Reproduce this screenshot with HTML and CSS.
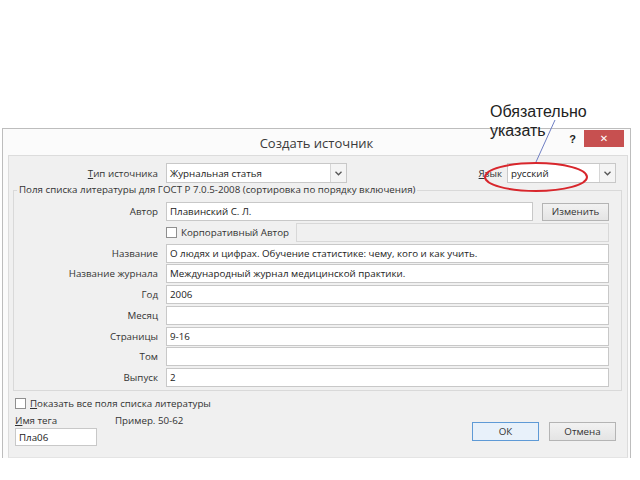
FILE: index.html
```html
<!DOCTYPE html>
<html lang="ru">
<head>
<meta charset="utf-8">
<title>Создать источник</title>
<link rel="stylesheet" href="styles.css">
</head>
<body>
<div class="page">
  <div class="window">
    <div class="titlebar">
      <span></span>
      <span class="title">Создать источник</span>
      <span class="controls"><span class="help">?</span><span class="close">✕</span></span>
    </div>
    <div class="client">
      <div class="toprow">
        <span class="lbl typelbl"><u>Т</u>ип источника</span>
        <div class="combo typecombo"><span class="val">Журнальная статья</span><span class="arrow"><svg width="7" height="5" viewBox="0 0 7 5"><polyline points="0.5,0.8 3.5,3.8 6.5,0.8" fill="none" stroke="#555" stroke-width="1.3"/></svg></span></div>
        <span class="lbl langlbl"><u>Я</u>зык</span>
        <div class="combo langcombo"><span class="val">русский</span><span class="arrow"><svg width="7" height="5" viewBox="0 0 7 5"><polyline points="0.5,0.8 3.5,3.8 6.5,0.8" fill="none" stroke="#555" stroke-width="1.3"/></svg></span></div>
      </div>
      <fieldset class="group">
        <legend>Поля списка литературы для ГОСТ Р 7.0.5-2008 (сортировка по порядку включения)</legend>
        <div class="fields">
          <span class="lbl">Автор</span>
          <div class="authorrow"><div class="input grow">Плавинский С. Л.</div><button class="btn edit">Изменить</button></div>
          <span></span>
          <div class="corprow"><span class="check"></span><span class="corplbl">Корпоративный Автор</span><div class="input disabled grow"></div></div>
          <span class="lbl">Название</span>
          <div class="input">О людях и цифрах. Обучение статистике: чему, кого и как учить.</div>
          <span class="lbl">Название журнала</span>
          <div class="input">Международный журнал медицинской практики.</div>
          <span class="lbl">Год</span>
          <div class="input">2006</div>
          <span class="lbl">Месяц</span>
          <div class="input"></div>
          <span class="lbl">Страницы</span>
          <div class="input">9-16</div>
          <span class="lbl">Том</span>
          <div class="input"></div>
          <span class="lbl">Выпуск</span>
          <div class="input">2</div>
        </div>
      </fieldset>
      <div class="bottom">
        <div class="left">
          <div class="showall"><span class="check"></span><span><u>П</u>оказать все поля списка литературы</span></div>
          <div class="tagrow"><span class="taglbl"><u>И</u>мя тега</span><span class="example">Пример. 50-62</span></div>
          <div class="input tag">Пла06</div>
        </div>
        <div class="buttons">
          <button class="btn ok">ОК</button>
          <button class="btn">Отмена</button>
        </div>
      </div>
    </div>
  </div>
  <div class="note">Обязательно<br>указать</div>
  <svg class="mark" width="640" height="480" viewBox="0 0 640 480">
    <line x1="555" y1="120" x2="536" y2="162" stroke="#6f7fc4" stroke-width="1"/>
    <ellipse cx="536" cy="177" rx="51" ry="14" fill="none" stroke="#d8262c" stroke-width="2"/>
  </svg>
</div>
</body>
</html>
```
FILE: styles.css
```css
* { box-sizing: border-box; }
html, body { margin: 0; padding: 0; background: #fff; }
body { width: 640px; height: 480px; overflow: hidden; font-family: "Open Sans", "Noto Sans", sans-serif; font-size: 9.75px; color: #333; }
.page { position: relative; width: 640px; height: 480px; padding-top: 128px; }
.window { margin-left: 2px; width: 629px; height: 330px; background: #fbfbfb; border: 1px solid #bdbdbd; border-bottom: none; display: flex; flex-direction: column; }
.titlebar { height: 26px; display: grid; grid-template-columns: 1fr auto 1fr; align-items: start; }
.title { font-size: 13px; color: #3a3a3a; line-height: 20px; margin-top: 4px; }
.controls { justify-self: end; display: flex; align-items: center; margin-right: 6px; margin-top: 1px; }
.help { font-family: "Liberation Sans", sans-serif; font-weight: bold; font-size: 11px; color: #222; margin-right: 8px; }
.close { width: 40px; height: 17px; background: #c75050; color: #fff; font-family: "DejaVu Sans", sans-serif; font-size: 10px; line-height: 17px; text-align: center; }
.client { margin-left: 5px; width: 620px; flex: 1; background: #f0f0f0; border: 1px solid #dcdcdc; border-bottom: 1px solid #e4e4e4; display: flex; flex-direction: column; }
.toprow { display: flex; align-items: center; margin-top: 7px; height: 20px; }
.lbl { text-align: right; white-space: nowrap; }
.typelbl { width: 149px; }
.combo { height: 20px; background: #fff; border: 1px solid #c8c8c8; display: flex; align-items: center; }
.typecombo { margin-left: 8px; width: 181px; }
.langcombo { margin-left: 5px; width: 109px; }
.langlbl { margin-left: 129px; width: 26px; }
.combo .val { flex: 1; padding-left: 3px; color: #222; }
.combo .arrow { width: 16px; height: 18px; border-left: 1px solid #d6d6d6; background: #f4f4f4; display: flex; align-items: center; justify-content: center; }
.group { margin: 0 5px 0 4px; padding: 5px 12px 3px 0; border: 1px solid #d9d9d9; min-width: 0; }
.group legend { margin-left: 3px; padding: 0 2px; line-height: 14px; }
.fields { display: grid; grid-template-columns: 144px 443px; column-gap: 8px; grid-auto-rows: 19px; row-gap: 1.75px; align-items: center; }
.input { height: 19px; background: #fff; border: 1px solid #c8c8c8; padding-left: 3px; line-height: 17px; color: #222; white-space: nowrap; overflow: hidden; }
.input.disabled { background: #f0f0f0; border-color: #d8d8d8; }
.authorrow, .corprow { display: flex; align-items: center; height: 19px; }
.grow { flex: 1; }
.authorrow .btn { margin-left: 9px; width: 67px; height: 18px; }
.check { width: 11px; height: 11px; border: 1px solid #8f8f8f; background: #fff; display: inline-block; flex: none; }
.corplbl { margin-left: 4px; width: 115px; white-space: nowrap; }
.btn { font-family: inherit; font-size: 9.75px; color: #333; background: linear-gradient(#f2f2f2, #e4e4e4); border: 1px solid #b4b4b4; padding: 0; }
.bottom { display: flex; justify-content: space-between; padding: 5px 11px 11px 6px; }
.left { display: flex; flex-direction: column; }
.showall { display: flex; align-items: center; height: 14px; gap: 4px; }
.tagrow { display: flex; height: 14px; margin-top: 3px; align-items: center; }
.taglbl { width: 100px; }
.input.tag { width: 82px; height: 18px; margin-top: 1px; }
.buttons { align-self: end; display: flex; gap: 10px; margin-bottom: 5px; }
.buttons .btn { width: 67px; height: 19px; }
.btn.ok { background: #e8f1fa; border-color: #5e9ad6; }
.note { position: absolute; left: 490px; top: 102px; font-family: "Liberation Sans", Arial, sans-serif; font-size: 16px; line-height: 19px; color: #222; }
.mark { position: absolute; left: 0; top: 0; pointer-events: none; }
```
